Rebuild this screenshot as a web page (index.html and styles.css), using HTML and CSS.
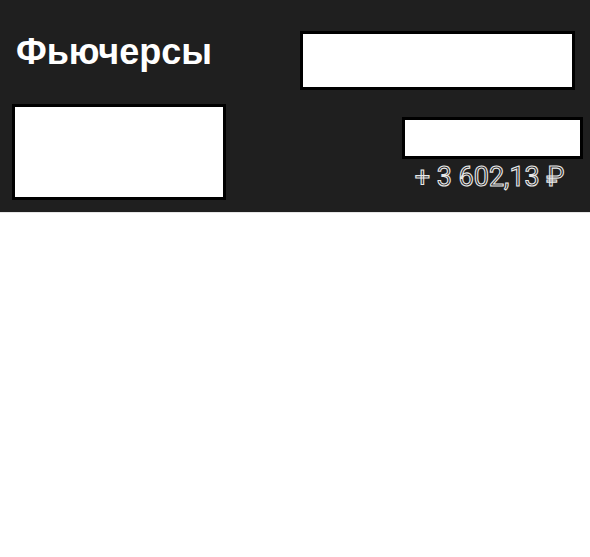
FILE: index.html
```html
<!DOCTYPE html>
<html lang="ru">
<head>
<meta charset="utf-8">
<link rel="stylesheet" href="styles.css">
</head>
<body>
<header class="header">
  <div class="row top">
    <h1 class="title">Фьючерсы</h1>
    <div class="box box-wide"></div>
  </div>
  <div class="row bottom">
    <div class="box box-left"></div>
    <div class="right">
      <div class="box box-small"></div>
      <div class="amount">+ 3 602,13 ₽</div>
    </div>
  </div>
</header>
</body>
</html>
```
FILE: styles.css
```css
html, body {
  margin: 0;
  padding: 0;
  background: #ffffff;
}
body {
  width: 590px;
  height: 557px;
  font-family: Roboto, "Noto Sans", sans-serif;
}
.header {
  box-sizing: border-box;
  height: 213px;
  background: #1f1f1f;
  border-bottom: 1px solid #e6e6e6;
  padding: 31px 7px 0 12px;
}
.row {
  display: flex;
  justify-content: space-between;
}
.top {
  align-items: flex-start;
  padding-right: 8px;
}
.title {
  margin: 0 0 0 4px;
  font-family: "Liberation Sans", Arial, sans-serif;
  font-size: 36px;
  font-weight: 700;
  color: #ffffff;
  line-height: 42px;
}
.box {
  box-sizing: border-box;
  background: #ffffff;
  border: 3px solid #000000;
}
.box-wide {
  width: 275px;
  height: 59px;
}
.bottom {
  margin-top: 14px;
  align-items: flex-start;
}
.box-left {
  width: 214px;
  height: 96px;
}
.right {
  display: flex;
  flex-direction: column;
  align-items: center;
  margin-top: 13px;
}
.box-small {
  width: 181px;
  height: 42px;
}
.amount {
  margin: 1px 6px 0 0;
  font-size: 27px;
  font-weight: 400;
  line-height: 34px;
  color: #1f1f1f;
  -webkit-text-stroke: 1.1px #e8e8e8;
}
```
